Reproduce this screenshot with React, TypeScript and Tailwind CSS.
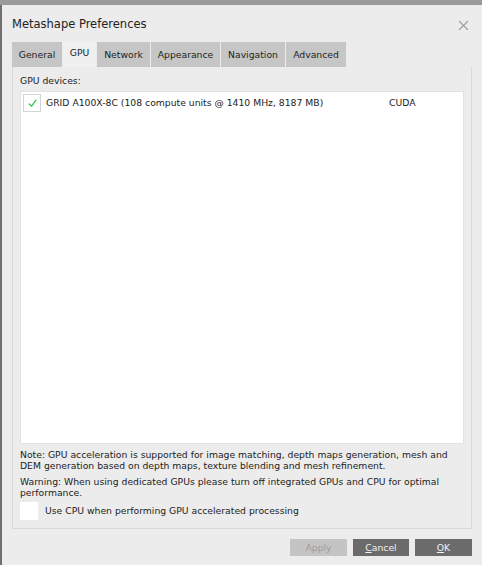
import React from 'react'

const tabs: [string, string][] = [
  ['General', 'w-[50px]'],
  ['GPU', 'w-[33px]'],
  ['Network', 'w-[53px]'],
  ['Appearance', 'w-[69px]'],
  ['Navigation', 'w-[64px]'],
  ['Advanced', 'w-[60px]'],
]

function CheckMark() {
  return (
    <svg className="w-[9px] h-[9px]" viewBox="0 0 10 10" fill="none">
      <path d="M1.5 5.5 L4 8 L8.8 1.2" stroke="#33c15a" strokeWidth={1.4} strokeLinecap="round" strokeLinejoin="round" />
    </svg>
  )
}

export default function App() {
  return (
    <div
      className="w-[482px] h-[565px] bg-[#8f8f8f] flex flex-col overflow-hidden text-[#222]"
      style={{ fontFamily: '"DejaVu Sans", Verdana, sans-serif' }}
    >
      {/* background window peeking through */}
      <div className="h-[5px] shrink-0 bg-[#9a9a9a]" />
      <div className="flex flex-1">
        <div className="w-[2px] bg-[#707070]" />
        <div className="flex-1 bg-[#ececec] flex flex-col px-[10px]">
          {/* title bar */}
          <div className="h-[37px] flex items-center justify-between pt-[3px]">
            <span className="text-[11.5px]">Metashape Preferences</span>
            <svg className="w-[11px] h-[11px] mr-[3px]" viewBox="0 0 10 10">
              <path d="M1 1 L9 9 M9 1 L1 9" stroke="#9a9a9a" strokeWidth={1.2} />
            </svg>
          </div>

          {/* tabs */}
          <div className="flex h-[25px] items-stretch gap-[1px]">
            {tabs.map(([t, w]) => (
              <div
                key={t}
                className={
                  t === 'GPU'
                    ? `${w} flex items-center justify-center bg-[#f0f0f0] text-[9.25px] pb-[3px]`
                    : `${w} flex items-center justify-center bg-[#c6c6c6] text-[9.25px]`
                }
              >
                {t}
              </div>
            ))}
          </div>

          {/* panel */}
          <div className="h-[462px] border border-[#d8d8d8] border-t-0 bg-[#ececec] flex flex-col px-[7px]">
            <div className="h-[24px] flex items-center text-[9.25px] pt-[4px]">GPU devices:</div>
            <div className="h-[353px] bg-white border border-[#e2e2e2] flex flex-col">
              <div className="flex items-center h-[20px] mt-[1px] pl-[2px] text-[9.25px]">
                <div className="w-[18px] h-[18px] border border-[#d4d4d4] bg-white flex items-center justify-center">
                  <CheckMark />
                </div>
                <span className="ml-[5px] w-[343px]">GRID A100X-8C (108 compute units @ 1410 MHz, 8187 MB)</span>
                <span>CUDA</span>
              </div>
            </div>
            <p className="mt-[5px] text-[9.25px] leading-[11px]">
              Note: GPU acceleration is supported for image matching, depth maps generation, mesh and DEM generation based on depth maps, texture blending and mesh refinement.
            </p>
            <p className="mt-[5px] text-[9.25px] leading-[11px]">
              Warning: When using dedicated GPUs please turn off integrated GPUs and CPU for optimal performance.
            </p>
            <div className="flex items-center mt-[4px] text-[9.25px]">
              <div className="w-[18px] h-[18px] bg-white" />
              <span className="ml-[7px]">Use CPU when performing GPU accelerated processing</span>
            </div>
          </div>

          {/* buttons */}
          <div className="flex justify-end gap-[6px] mt-[10px]">
            <div className="w-[57px] h-[17px] bg-[#c4c4c4] text-[#9c9c9c] text-[9.25px] flex items-center justify-center">Apply</div>
            <div className="w-[56px] h-[17px] bg-[#6b6b6b] text-[#f2f2f2] text-[9.25px] flex items-center justify-center">
              <span><span className="underline">C</span>ancel</span>
            </div>
            <div className="w-[57px] h-[17px] bg-[#6b6b6b] text-[#f2f2f2] text-[9.25px] flex items-center justify-center">
              <span><span className="underline">O</span>K</span>
            </div>
          </div>
        </div>
      </div>
    </div>
  )
}
